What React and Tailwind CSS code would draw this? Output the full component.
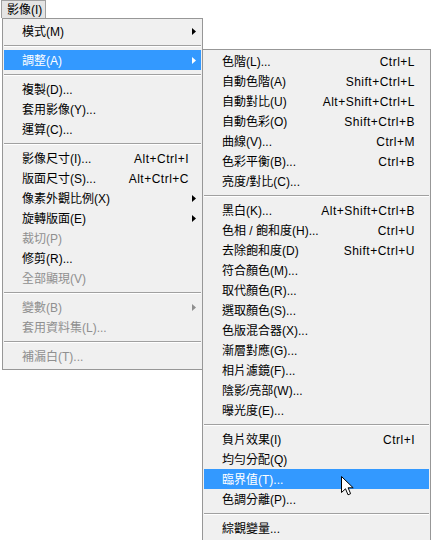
import React from 'react';

const FONT = { fontFamily: '"Liberation Sans", "Noto Sans CJK TC", sans-serif' };

const mainItems = [
  { label: '模式(M)', arrow: true },
  { sep: true },
  { label: '調整(A)', arrow: true, active: true },
  { sep: true },
  { label: '複製(D)...' },
  { label: '套用影像(Y)...' },
  { label: '運算(C)...' },
  { sep: true },
  { label: '影像尺寸(I)...', shortcut: 'Alt+Ctrl+I' },
  { label: '版面尺寸(S)...', shortcut: 'Alt+Ctrl+C' },
  { label: '像素外觀比例(X)', arrow: true },
  { label: '旋轉版面(E)', arrow: true },
  { label: '裁切(P)', disabled: true },
  { label: '修剪(R)...' },
  { label: '全部顯現(V)', disabled: true },
  { sep: true },
  { label: '變數(B)', arrow: true, disabled: true },
  { label: '套用資料集(L)...', disabled: true },
  { sep: true },
  { label: '補漏白(T)...', disabled: true },
];

const subItems = [
  { label: '色階(L)...', shortcut: 'Ctrl+L' },
  { label: '自動色階(A)', shortcut: 'Shift+Ctrl+L' },
  { label: '自動對比(U)', shortcut: 'Alt+Shift+Ctrl+L' },
  { label: '自動色彩(O)', shortcut: 'Shift+Ctrl+B' },
  { label: '曲線(V)...', shortcut: 'Ctrl+M' },
  { label: '色彩平衡(B)...', shortcut: 'Ctrl+B' },
  { label: '亮度/對比(C)...' },
  { sep: true },
  { label: '黑白(K)...', shortcut: 'Alt+Shift+Ctrl+B' },
  { label: '色相 / 飽和度(H)...', shortcut: 'Ctrl+U' },
  { label: '去除飽和度(D)', shortcut: 'Shift+Ctrl+U' },
  { label: '符合顏色(M)...' },
  { label: '取代顏色(R)...' },
  { label: '選取顏色(S)...' },
  { label: '色版混合器(X)...' },
  { label: '漸層對應(G)...' },
  { label: '相片濾鏡(F)...' },
  { label: '陰影/亮部(W)...' },
  { label: '曝光度(E)...' },
  { sep: true },
  { label: '負片效果(I)', shortcut: 'Ctrl+I' },
  { label: '均勻分配(Q)' },
  { label: '臨界值(T)...', active: true, cursor: true },
  { label: '色調分離(P)...' },
  { sep: true },
  { label: '綜觀變量...' },
];

const Arrow = ({ color }) => (
  <svg width="4" height="7" viewBox="0 0 4 7" className="absolute right-[5px] top-[7px]">
    <path d="M0 0 L4 3.5 L0 7 Z" fill={color} />
  </svg>
);

const Cursor = () => (
  <svg width="13" height="20" viewBox="0 0 13 20" className="absolute left-[137px] top-[7px]">
    <path d="M0.5 0.5 L0.5 16.5 L4.5 12.8 L7 18.8 L9.6 17.7 L7.1 11.8 L12.2 11.8 Z" fill="#ffffff" stroke="#000000" strokeWidth="1" strokeLinejoin="miter" />
  </svg>
);

const Separator = () => (
  <div className="h-[9px] flex items-center">
    <div className="w-full h-0 border-t border-[#a0a0a0] border-b border-b-white" />
  </div>
);

const Item = ({ item, shortcutPad }) => {
  const textColor = item.active ? 'text-white' : item.disabled ? 'text-[#8f8f8f]' : 'text-black';
  const arrowColor = item.active ? '#ffffff' : item.disabled ? '#8f8f8f' : '#000000';
  return (
    <div className={`relative h-[20px] flex items-center pl-[18px] ${shortcutPad} ${item.active ? 'bg-[#3399ff]' : ''} ${textColor}`}>
      <span className="flex-1 whitespace-nowrap leading-none pt-px">{item.label}</span>
      {item.shortcut && <span className="whitespace-nowrap leading-none tracking-[0.5px] pt-px">{item.shortcut}</span>}
      {item.arrow && <Arrow color={arrowColor} />}
      {item.cursor && <Cursor />}
    </div>
  );
};

const Menu = ({ items, className, shortcutPad }) => (
  <div className={`bg-[#f0f0f0] border border-[#979797] ${className}`}>
    {items.map((it, i) =>
      it.sep ? <Separator key={i} /> : <Item key={i} item={it} shortcutPad={shortcutPad} />
    )}
  </div>
);

export default function App() {
  return (
    <div className="w-[432px] h-[540px] bg-white overflow-hidden text-[12px]" style={FONT}>
      <div className="h-[18px] pl-[1px]">
        <div className="inline-flex items-center h-[18px] w-[45px] pl-[5px] bg-[#e4e4e4] border border-[#a0a0a0] border-b-0 text-black leading-none">
          影像(I)
        </div>
      </div>
      <div className="flex items-start pl-[2px]">
        <Menu items={mainItems} className="w-[201px] pt-[2px] pb-[3px] px-px" shortcutPad="pr-[12px]" />
        <Menu items={subItems} className="w-[229px] -ml-px mt-[31px] pt-px pb-[3px] px-px" shortcutPad="pr-[14px]" />
      </div>
    </div>
  );
}
